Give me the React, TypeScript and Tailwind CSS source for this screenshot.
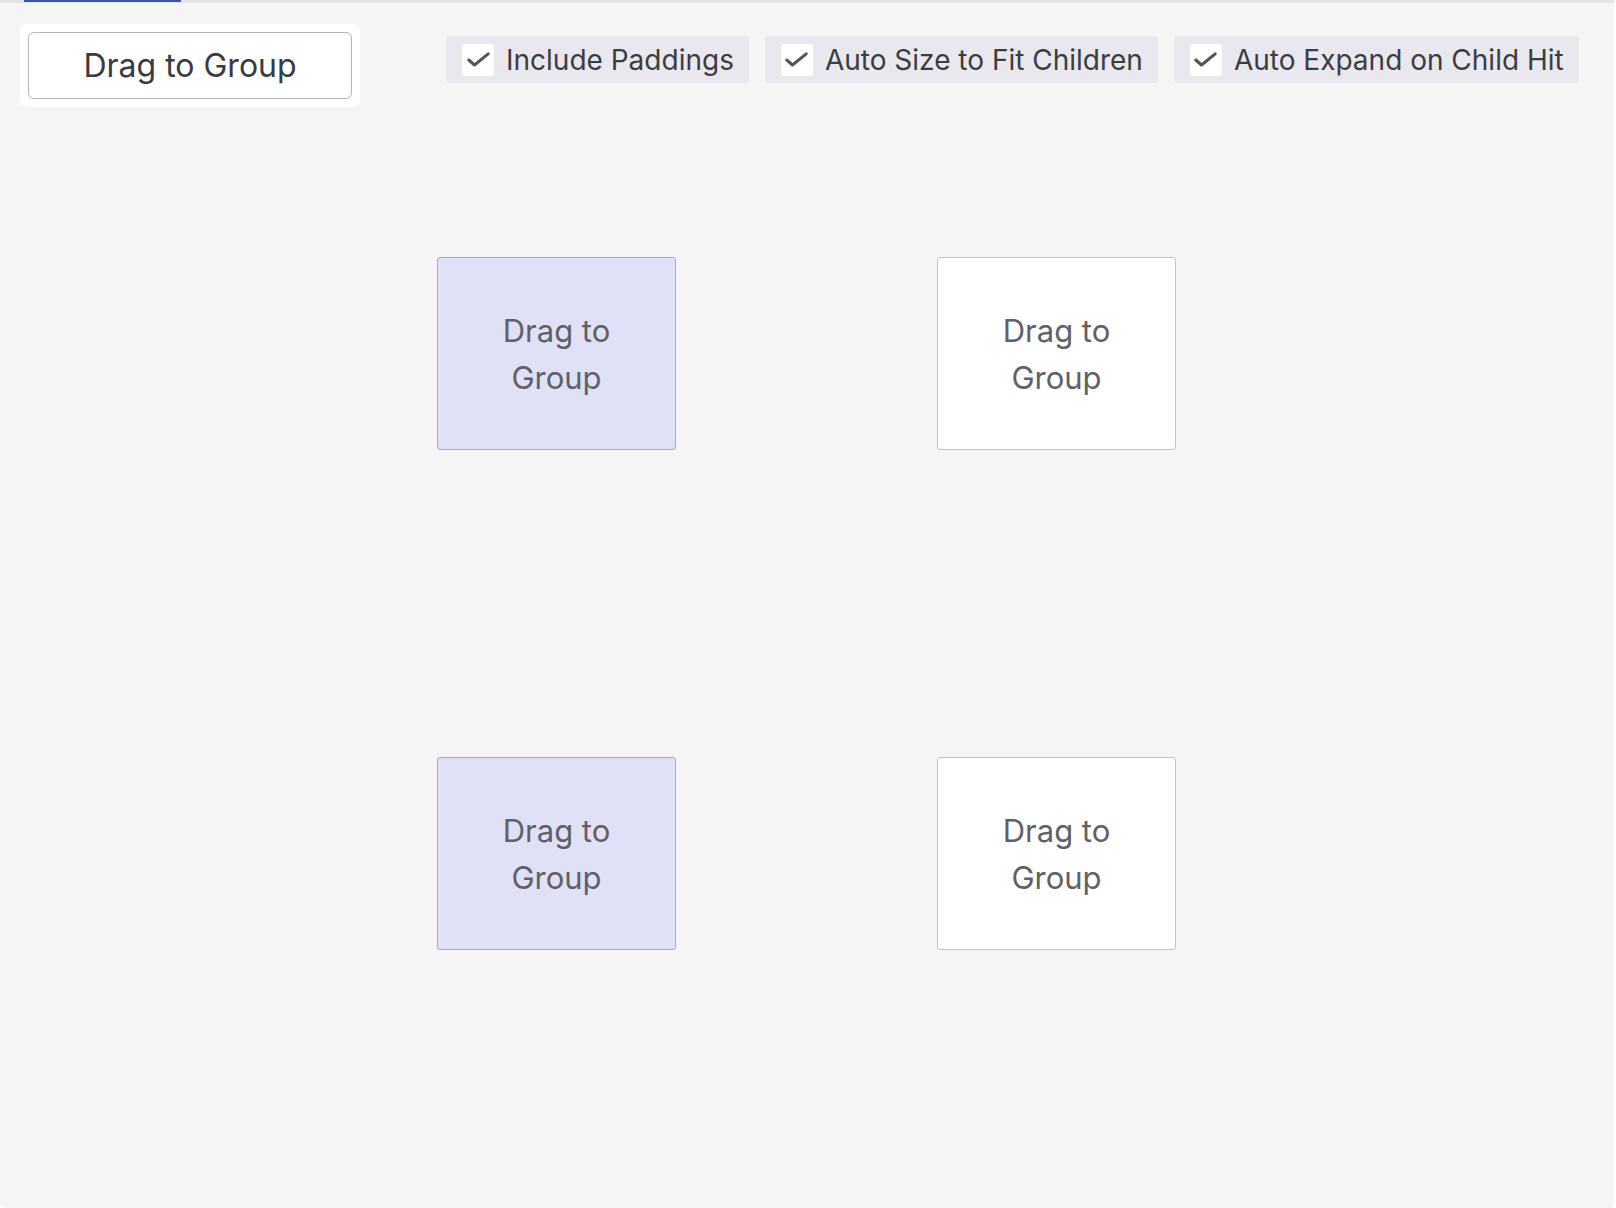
import { useState } from "react"

const options = [
  { id: "paddings", label: "Include Paddings" },
  { id: "autosize", label: "Auto Size to Fit Children" },
  { id: "autoexpand", label: "Auto Expand on Child Hit" },
]

const nodes = [
  { id: 1, left: "left-[437px]", top: "top-[257px]", group: true },
  { id: 2, left: "left-[937px]", top: "top-[257px]", group: false },
  { id: 3, left: "left-[437px]", top: "top-[757px]", group: true },
  { id: 4, left: "left-[937px]", top: "top-[757px]", group: false },
]

function Check() {
  return (
    <svg width="23" height="15" viewBox="0 0 23 15" fill="none">
      <path d="M1.8 8 L7.5 13 L21.2 1.8" stroke="#555" strokeWidth="3" strokeLinecap="round" strokeLinejoin="round" />
    </svg>
  )
}

export default function App() {
  const [checked, setChecked] = useState<Record<string, boolean>>({
    paddings: true,
    autosize: true,
    autoexpand: true,
  })

  return (
    <div
      className="relative h-[1208px] w-full overflow-hidden bg-[#f5f5f5] border-r-2 border-white rounded-b-[6px]"
      style={{ fontFamily: "Inter, 'Noto Sans', sans-serif" }}
    >
      <div className="h-[3px] bg-[#e4e4e4]">
        <div className="ml-[24px] h-[2px] w-[157px] bg-[#3f51b5]" />
      </div>

      <div className="mt-[21px] flex items-start">
        <div className="ml-[20px] shrink-0 rounded-[7px] bg-white p-[8px]">
          <button className="flex h-[67px] w-[324px] items-center justify-center rounded-[6px] border-[1.5px] border-[#b5b5b5] bg-white text-[32px] text-[#3a3a40]">
            Drag to Group
          </button>
        </div>

        <div className="ml-[86px] mt-[12px] flex shrink-0 gap-4">
          {options.map((o) => (
            <label
              key={o.id}
              className="flex h-[47px] shrink-0 cursor-pointer items-center gap-[12px] whitespace-nowrap rounded-[4px] bg-[#e9e8ee] pl-[16px] pr-[15px]"
              onClick={() => setChecked((p) => ({ ...p, [o.id]: !p[o.id] }))}
            >
              <span className="flex h-[32px] w-[32px] items-center justify-center rounded-[3px] bg-white">
                {checked[o.id] && <Check />}
              </span>
              <span className="text-[28px] leading-none text-[#3c3c43]">{o.label}</span>
            </label>
          ))}
        </div>
      </div>

      {nodes.map((n) => (
        <div
          key={n.id}
          className={`absolute ${n.left} ${n.top} flex h-[193px] w-[239px] items-center justify-center rounded-[3px] border text-center text-[31px] leading-[47px] text-[#606068] ${
            n.group ? "border-[#a9a9c0] bg-[#e0e0f6]" : "border-[#c4c4c4] bg-white"
          }`}
        >
          Drag to
          <br />
          Group
        </div>
      ))}
    </div>
  )
}
